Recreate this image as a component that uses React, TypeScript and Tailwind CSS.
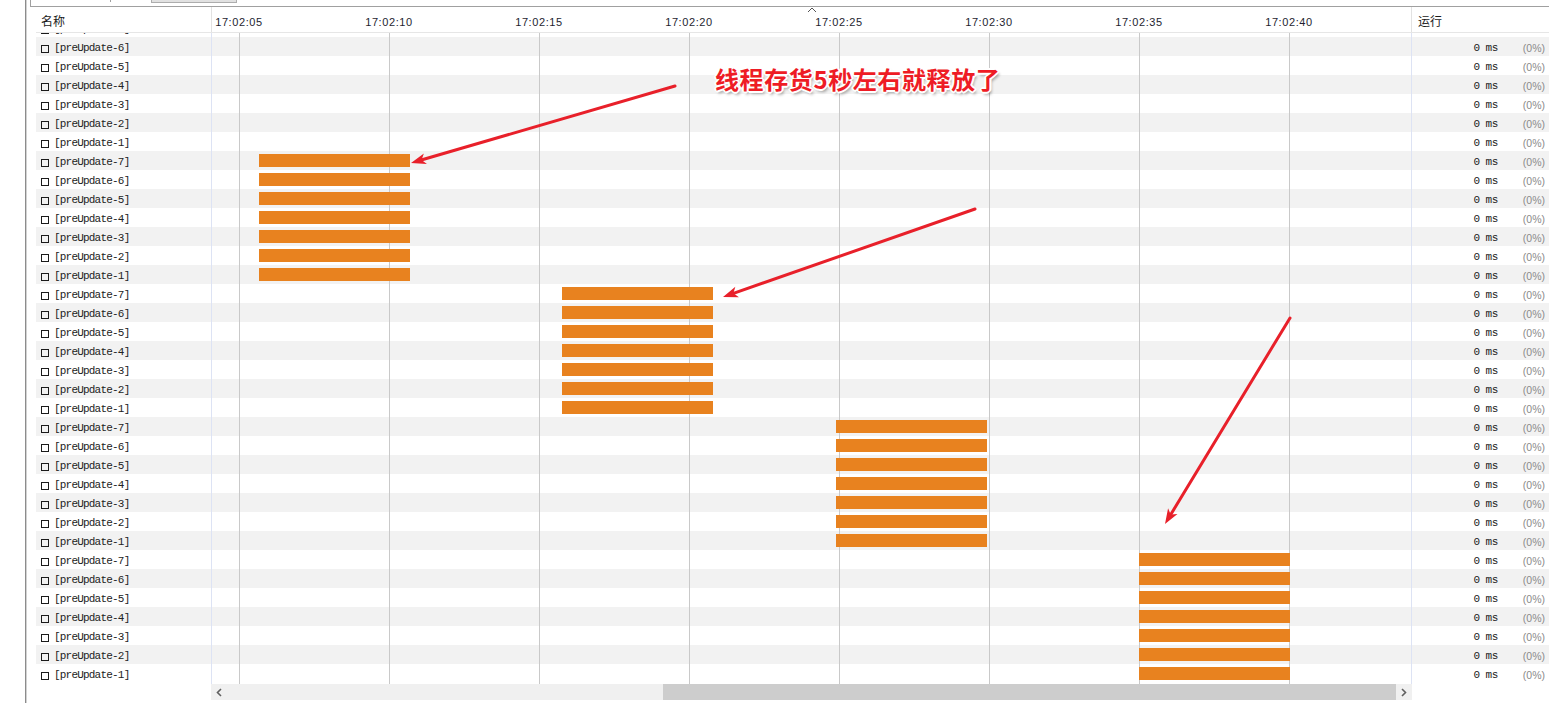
import React from "react";

const GRID = [27, 177, 327, 477, 627, 777, 927, 1077];
const LABELS = ["17:02:05", "17:02:10", "17:02:15", "17:02:20", "17:02:25", "17:02:30", "17:02:35", "17:02:40"];
const BARS = [47, 350, 624, 927];

type Row = { n: number; bar: number | null };
const rows: Row[] = [];
[6, 5, 4, 3, 2, 1].forEach((n) => rows.push({ n, bar: null }));
BARS.forEach((b) => [7, 6, 5, 4, 3, 2, 1].forEach((n) => rows.push({ n, bar: b })));

function Arrow({ x1, y1, x2, y2 }: { x1: number; y1: number; x2: number; y2: number }) {
  const dx = x2 - x1;
  const dy = y2 - y1;
  const len = Math.hypot(dx, dy);
  const ux = dx / len;
  const uy = dy / len;
  const nx = -uy;
  const ny = ux;
  const L = 15;
  const W = 5.5;
  const bx = x2 - ux * L;
  const by = y2 - uy * L;
  const pts = `${x2},${y2} ${bx + nx * W},${by + ny * W} ${x2 - ux * (L - 4)},${y2 - uy * (L - 4)} ${bx - nx * W},${by - ny * W}`;
  return (
    <g>
      <line x1={x1} y1={y1} x2={x2 - ux * 8} y2={y2 - uy * 8} stroke="#e8202a" strokeWidth={3} strokeLinecap="round" />
      <polygon points={pts} fill="#e8202a" />
    </g>
  );
}

function NameCell({ n }: { n: number }) {
  return (
    <div className="w-[175px] shrink-0 h-[19px] flex items-center pl-[5px] pt-[4px]">
      <span className="w-[8px] h-[8px] border border-[#1a1a1a] shrink-0" />
      <span className="ml-[5px] font-['Liberation_Mono',monospace] text-[11px] tracking-[-0.8px] text-[#222] leading-none">
        [preUpdate-{n}]
      </span>
    </div>
  );
}

function TimeCell({ bar }: { bar: number | null }) {
  return (
    <div className="w-[1199px] shrink-0 h-[19px] relative">
      {GRID.map((g) => (
        <div key={g} className="absolute top-0 bottom-0 w-px bg-[#c9c9c9]" style={{ left: g }} />
      ))}
      {bar !== null && (
        <div className="absolute top-[3px] h-[13px] w-[151px] bg-[#e8821f] z-10" style={{ left: bar }} />
      )}
    </div>
  );
}

function RunCell() {
  return (
    <div className="flex-1 h-[19px] flex items-center justify-end pr-[4px] pt-[4px]">
      <span className="font-['Liberation_Mono',monospace] text-[11px] tracking-[-0.5px] text-[#1a1a1a] leading-none">0 ms</span>
      <span className="ml-[25px] font-['Liberation_Sans',sans-serif] text-[10.5px] text-[#8a8a8a] leading-none">(0%)</span>
    </div>
  );
}

function Sep({ body }: { body?: boolean }) {
  return <div className={`w-px shrink-0 self-stretch ${body ? "bg-[#dde3f4]" : "bg-[#e2e2e2]"}`} />;
}

export default function App() {
  return (
    <div className="w-[1549px] h-[703px] relative overflow-hidden bg-white flex font-['Liberation_Sans',sans-serif]">
      {/* left frame */}
      <div className="w-[30px] shrink-0 h-full flex">
        <div className="w-[25px]" />
        <div className="w-px bg-[#8c8c8c]" />
        <div className="w-px bg-[#d2d2d2]" />
      </div>

      <div className="flex-1 flex flex-col">
        {/* top strip (cropped tabs) */}
        <div className="h-[7px] shrink-0 border-l border-b border-[#a0a0a0] flex items-start">
          <div className="w-[79px]" />
          <div className="w-px h-[2px] bg-[#a0a0a0]" />
          <div className="w-[40px]" />
          <div className="w-[86px] h-[3px] bg-[#e1e1e1] border border-t-0 border-[#adadad]" />
        </div>

        <div className="flex flex-1">
          <div className="w-[6px] shrink-0" />
          <div className="flex-1 flex flex-col">
            {/* header */}
            <div className="h-[26px] shrink-0 flex border-b border-[#e6e6e6]">
              <div className="w-[175px] shrink-0 flex items-center pl-[5px] pt-[2px] font-['Noto_Sans_CJK_SC',sans-serif] text-[12px] text-[#1a1a1a]">
                名称
              </div>
              <Sep />
              <div className="w-[1199px] shrink-0 relative">
                <svg className="absolute left-1/2 -translate-x-1/2 top-0" width="10" height="6" viewBox="0 0 10 6">
                  <polyline points="1,5 5,1 9,5" fill="none" stroke="#555" strokeWidth="1" />
                </svg>
                {GRID.map((g, i) => (
                  <span
                    key={g}
                    className="absolute top-[10px] -translate-x-1/2 text-[11px] leading-none tracking-[0.6px] text-[#1e1e30]"
                    style={{ left: g }}
                  >
                    {LABELS[i]}
                  </span>
                ))}
              </div>
              <Sep />
              <div className="flex-1 flex items-center pl-[6px] pt-[2px] font-['Noto_Sans_CJK_SC',sans-serif] text-[12px] text-[#1a1a1a]">
                运行
              </div>
            </div>

            {/* body */}
            <div className="h-[651px] shrink-0 overflow-hidden flex">
              <div className="flex flex-col">
                {/* partial row, scrolled mostly out of view */}
                <div className="h-[4px] overflow-hidden flex items-end bg-white">
                  <div className="flex">
                    <NameCell n={7} />
                    <Sep body />
                    <TimeCell bar={null} />
                    <Sep body />
                    <div className="w-[137px] h-[19px]" />
                  </div>
                </div>
                {rows.map((r, i) => (
                  <div key={i} className={`flex h-[19px] w-[1513px] ${i % 2 === 0 ? "bg-[#f2f2f2]" : "bg-white"}`}>
                    <NameCell n={r.n} />
                    <Sep body />
                    <TimeCell bar={r.bar} />
                    <Sep body />
                    <RunCell />
                  </div>
                ))}
                <div className="h-[1px] w-[1513px] flex">
                  <div className="w-[175px]" />
                  <Sep body />
                  <TimeCell bar={null} />
                  <Sep body />
                </div>
              </div>
            </div>

            {/* horizontal scrollbar */}
            <div className="h-[16px] shrink-0 flex">
              <div className="w-[175px] shrink-0" />
              <div className="w-[1201px] shrink-0 flex bg-[#f0f0f0]">
                <div className="w-[16px] flex items-center justify-center">
                  <svg width="6" height="9" viewBox="0 0 6 9">
                    <polyline points="5,1 1.5,4.5 5,8" fill="none" stroke="#606060" strokeWidth="1.6" />
                  </svg>
                </div>
                <div className="flex-1" />
                <div className="w-[733px] bg-[#cdcdcd]" />
                <div className="w-[16px] flex items-center justify-center">
                  <svg width="6" height="9" viewBox="0 0 6 9">
                    <polyline points="1,1 4.5,4.5 1,8" fill="none" stroke="#606060" strokeWidth="1.6" />
                  </svg>
                </div>
              </div>
            </div>
            <div className="flex-1" />
          </div>
        </div>
      </div>

      {/* annotation overlay */}
      <svg className="absolute inset-0 pointer-events-none z-20" width="1549" height="703">
        <Arrow x1={675} y1={86} x2={411} y2={163} />
        <Arrow x1={975} y1={209} x2={723} y2={297} />
        <Arrow x1={1290} y1={318} x2={1165} y2={524} />
      </svg>
      <div
        className="absolute left-[715px] top-[63px] z-30 font-['Noto_Sans_CJK_SC',sans-serif] font-bold text-[24px] leading-[32px] tracking-[0.6px] text-[#ee1c25] whitespace-nowrap [text-shadow:1px_1px_0_#fff,-1px_-1px_0_#fff,1px_-1px_0_#fff,-1px_1px_0_#fff,2px_0_0_#fff,-2px_0_0_#fff,0_2px_0_#fff,0_-2px_0_#fff,2px_3px_3px_rgba(0,0,0,0.35)]"
      >
        线程存货5秒左右就释放了
      </div>
    </div>
  );
}
